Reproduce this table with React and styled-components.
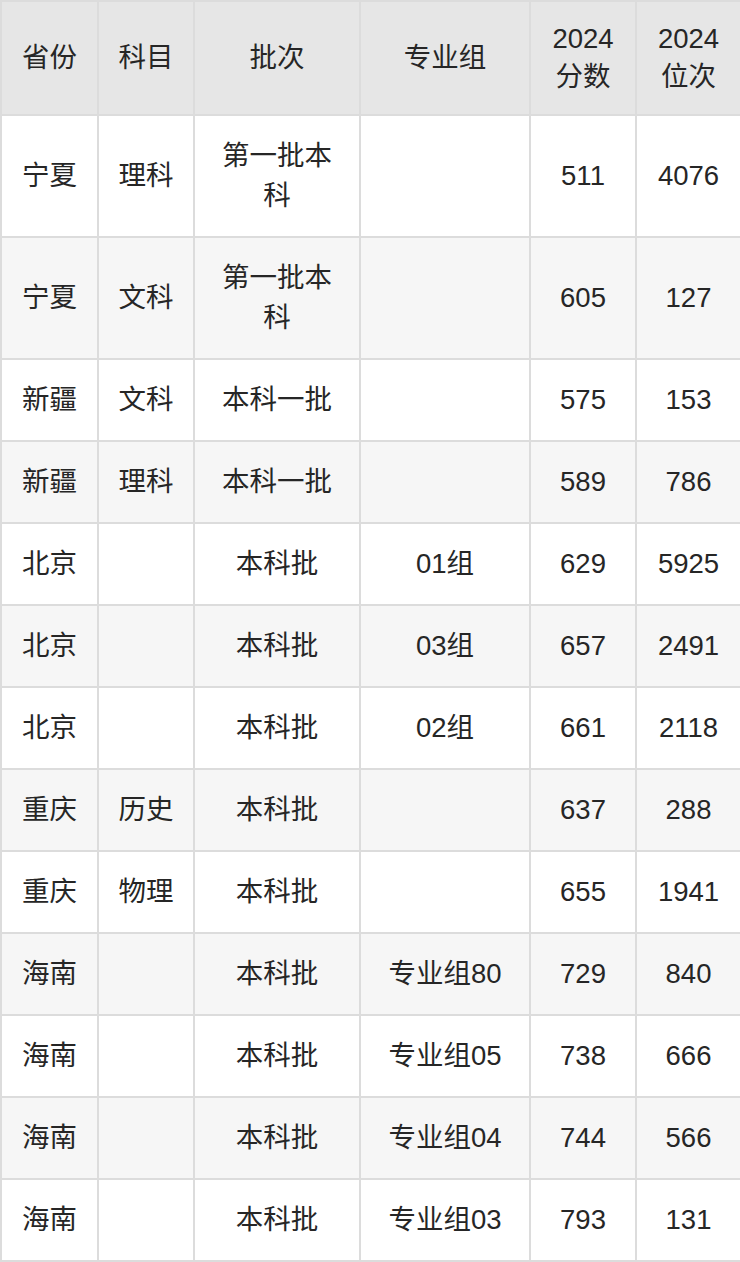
import styled, { createGlobalStyle } from "styled-components";

const rows = [
  ["宁夏", "理科", "第一批本科", "", "511", "4076"],
  ["宁夏", "文科", "第一批本科", "", "605", "127"],
  ["新疆", "文科", "本科一批", "", "575", "153"],
  ["新疆", "理科", "本科一批", "", "589", "786"],
  ["北京", "", "本科批", "01组", "629", "5925"],
  ["北京", "", "本科批", "03组", "657", "2491"],
  ["北京", "", "本科批", "02组", "661", "2118"],
  ["重庆", "历史", "本科批", "", "637", "288"],
  ["重庆", "物理", "本科批", "", "655", "1941"],
  ["海南", "", "本科批", "专业组80", "729", "840"],
  ["海南", "", "本科批", "专业组05", "738", "666"],
  ["海南", "", "本科批", "专业组04", "744", "566"],
  ["海南", "", "本科批", "专业组03", "793", "131"],
];

const widths = [97, 96, 166, 170, 106, 105];

export default function App() {
  return (
    <>
      <GlobalStyle />
      <Table>
        <colgroup>
          {widths.map((w, i) => (
            <col key={i} style={{ width: w }} />
          ))}
        </colgroup>
        <thead>
          <tr>
            <Th $left>省份</Th>
            <Th>科目</Th>
            <Th>批次</Th>
            <Th>专业组</Th>
            <Th>2024<br />分数</Th>
            <Th>2024<br />位次</Th>
          </tr>
        </thead>
        <tbody>
          {rows.map((r, i) => (
            <Row key={i} $striped={i % 2 === 1}>
              {r.map((c, j) => (
                <Td key={j} $left={j === 0} $wrap={j === 2}>{c}</Td>
              ))}
            </Row>
          ))}
        </tbody>
      </Table>
    </>
  );
}

const GlobalStyle = createGlobalStyle`
  body {
    margin: 0;
    background: #fff;
    font-family: "Liberation Sans", "Noto Sans CJK SC", sans-serif;
    color: #262626;
  }
`;

const Table = styled.table`
  width: 740px;
  table-layout: fixed;
  border-collapse: collapse;
  border: 2px solid #dcdcdc;
  font-size: 27.5px;
  line-height: 40px;
`;

const Th = styled.th`
  background: #e6e6e6;
  font-weight: normal;
  border: 2px solid #dcdcdc;
  padding: 18px 8px 18px ${(p) => (p.$left ? "20px" : "8px")};
  text-align: ${(p) => (p.$left ? "left" : "center")};
  line-height: 38px;
  white-space: nowrap;
`;

const Row = styled.tr`
  background: ${(p) => (p.$striped ? "#f6f6f6" : "#fff")};
`;

const Td = styled.td`
  border: 2px solid #dcdcdc;
  padding: 20px ${(p) => (p.$wrap ? "20px" : "8px")} 20px
    ${(p) => (p.$left ? "20px" : p.$wrap ? "20px" : "8px")};
  text-align: ${(p) => (p.$left ? "left" : "center")};
  white-space: ${(p) => (p.$wrap ? "normal" : "nowrap")};
  word-break: break-all;
`;
